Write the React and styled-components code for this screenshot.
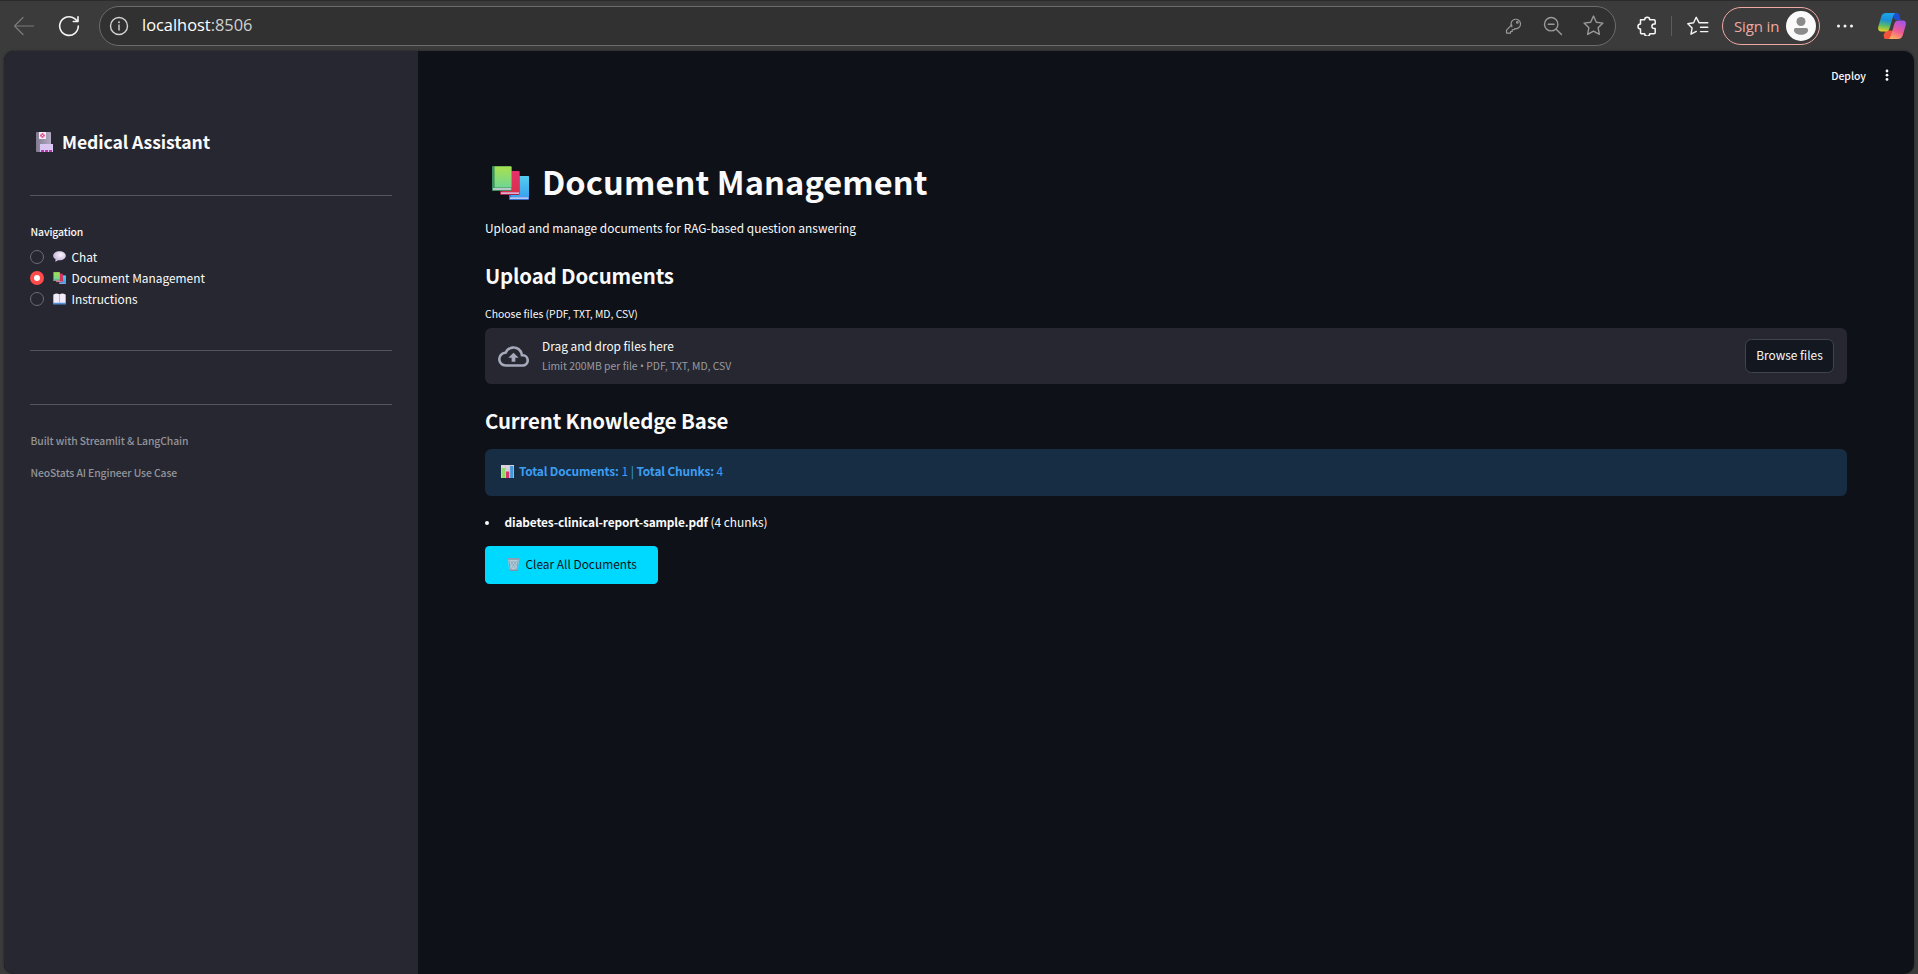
import React from 'react';
import styled, { createGlobalStyle } from 'styled-components';
import { MdOutlineCloudUpload } from 'react-icons/md';

const sans = '"Noto Sans CJK SC", "Noto Sans", sans-serif';

const Global = createGlobalStyle`
  *, *::before, *::after { box-sizing: border-box; }
  html, body { margin: 0; height: 100%; overflow: hidden; background: #3b3b3b; }
  h1, h2, p, ul { margin: 0; padding: 0; }
  svg { display: block; flex: none; }
`;

const Browser = styled.div`
  width: 1918px;
  height: 974px;
  display: flex;
  flex-direction: column;
  background: #3b3b3b;
  font: 400 11.9px/21px ${sans};
  color: #fafafa;
`;

/* ---------- browser toolbar ---------- */

const Toolbar = styled.header`
  height: 51px;
  flex: none;
  display: flex;
  align-items: center;
  padding: 0 12px 1px 13px;
  border-top: 1px solid #2b2b2b;
`;

const ToolIcon = styled.svg`
  width: ${p => p.$size || 20}px;
  height: ${p => p.$size || 20}px;
  margin-left: ${p => p.$gap || 0}px;
  fill: none;
  stroke: ${p => p.$color || '#f5f5f5'};
  stroke-width: ${p => p.$weight || 1.3};
  stroke-linecap: round;
  stroke-linejoin: round;
`;

const AddressBar = styled.div`
  width: 1517px;
  height: 40px;
  margin-left: 19px;
  padding: 0 11px 0 9px;
  display: flex;
  align-items: center;
  border: 1px solid #6c6c6c;
  border-radius: 20px;
  background: #313131;
`;

const Url = styled.span`
  flex: 1;
  margin: -1px 0 0 13px;
  font: 400 16.4px/22px "Open Sans", "Noto Sans", sans-serif;
  color: #fff;
  span { color: #d0d0d0; }
`;

const Separator = styled.i`
  width: 1px;
  height: 20px;
  margin: 0 15px 0 14px;
  background: #5c5c5c;
`;

const SignIn = styled.button`
  width: 98px;
  height: 38px;
  margin: 0 0 0 13px;
  padding: 0 3px 0 11px;
  display: flex;
  align-items: center;
  justify-content: space-between;
  border: 1.5px solid #efa9a4;
  border-radius: 19px;
  background: transparent;
  color: #efa9a4;
  font: 400 15px/20px "Open Sans", "Noto Sans", sans-serif;
  letter-spacing: -0.15px;
  white-space: nowrap;
`;

/* ---------- application page ---------- */

const Page = styled.div`
  flex: 1;
  display: flex;
  margin: 0 4px;
  overflow: hidden;
  border-radius: 10px;
  background: #0e1117;
  box-shadow: 0 0 3px rgba(0, 0, 0, 0.4);
`;

const Sidebar = styled.aside`
  width: 414px;
  flex: none;
  padding: 78px 26px 0;
  background: #262730;
`;

const Brand = styled.h2`
  display: flex;
  align-items: center;
  gap: 9px;
  padding-left: 6px;
  font-size: 17.6px;
  line-height: 25px;
  font-weight: 700;
  letter-spacing: -0.1px;
`;

const Rule = styled.hr`
  height: 1px;
  margin: ${p => p.$top}px 0 28px;
  border: 0;
  background: #53545c;
`;

const Caption = styled.p`
  padding-left: ${p => (p.$indent ? 0.5 : 0)}px;
  font-size: 10.4px;
  line-height: 15px;
  color: ${p => (p.$muted ? '#93949a' : '#fafafa')};
  font-weight: ${p => (p.$strong ? 500 : 400)};
  letter-spacing: ${p => (p.$strong ? -0.11 : 0)}px;
  & + & { margin-top: 17px; }
`;

const RadioList = styled.div`
  margin-top: 7px;
`;

const RadioItem = styled.label`
  display: flex;
  align-items: center;
  height: 21px;
`;

const Radio = styled.i`
  width: 14px;
  height: 14px;
  margin: 1px 9px 0 0;
  border-radius: 50%;
  border: ${p => (p.$on ? '4.5px solid #ff4b4b' : '1px solid #6b6c75')};
  background: ${p => (p.$on ? '#fff' : '#262730')};
`;

const RadioText = styled.span`
  margin-left: 5.5px;
`;

const Main = styled.main`
  flex: 1;
  min-width: 0;
  padding: 0 67px;
`;

const AppHeader = styled.div`
  height: 106px;
  margin-right: -42px;
  padding-top: 17px;
  display: flex;
  justify-content: flex-end;
  align-items: flex-start;
  gap: 19px;
  font-size: 10.4px;
  font-weight: 500;
  line-height: 15px;
  svg { margin-top: 1px; }
`;

const Title = styled.h1`
  display: flex;
  align-items: center;
  gap: 13px;
  padding-left: 7px;
  font-size: 32.6px;
  line-height: 47px;
  font-weight: 700;
  letter-spacing: 0.1px;
  svg { margin-top: 4px; }
`;

const Lead = styled.p`
  margin-top: 13px;
  letter-spacing: 0.02px;
`;

const Heading = styled.h2`
  margin-top: ${p => p.$top}px;
  font-size: 20.4px;
  line-height: 30px;
  font-weight: 700;
  letter-spacing: -0.15px;
`;

const FieldLabel = styled(Caption)`
  margin-top: 16px;
`;

const Dropzone = styled.section`
  height: 56px;
  margin-top: 7px;
  padding: 0 13px;
  display: flex;
  align-items: center;
  border-radius: 6.4px;
  background: #262730;
  > svg { color: #a5a9ba; }
`;

const DropText = styled.div`
  flex: 1;
  margin: -4px 0 0 13px;
`;

const Hint = styled(Caption)`
  margin-top: 2px;
  color: #9a9ba1;
  span { font-family: "Open Sans", sans-serif; }
`;

const BrowseButton = styled.button`
  width: 89px;
  height: 34px;
  padding: 0 0 3px;
  border: 1px solid #41444c;
  border-radius: 6.4px;
  background: #131720;
  color: #fafafa;
  font: 400 11.9px/21px ${sans};
`;

const InfoBox = styled.div`
  height: 47px;
  margin-top: 14px;
  padding: 11px 16px;
  display: flex;
  align-items: flex-start;
  gap: 5px;
  border-radius: 6.4px;
  background: #172d43;
  color: #3d9df3;
  svg { margin-top: 5px; }
`;

const Strong = styled.b`
  font-weight: 700;
  letter-spacing: -0.15px;
`;

const FileList = styled.ul`
  margin-top: 15px;
  list-style: none;
`;

const FileItem = styled.li`
  display: flex;
  align-items: center;
  white-space: pre;
  &::before {
    content: '';
    width: 4px;
    height: 4px;
    margin: 2px 15.5px 0 0;
    border-radius: 50%;
    background: #fafafa;
  }
`;

const ClearButton = styled.button`
  width: 173px;
  height: 38px;
  margin-top: 14px;
  padding: 0 0 3px 22px;
  display: flex;
  align-items: center;
  gap: 5.5px;
  border: 0;
  border-radius: 4.5px;
  background: #00d9ff;
  color: #0e1117;
  font: 400 11.9px/21px ${sans};
  svg { margin-top: 2px; }
`;

/* ---------- drawings ---------- */

const Books = ({ w, h }) => (
  <svg width={w} height={h} viewBox="0 0 37 34">
    <defs>
      <linearGradient id="bg" x2="0" y2="1"><stop stopColor="#a8e04f" /><stop offset="1" stopColor="#6fd693" /></linearGradient>
      <linearGradient id="br" x2="0" y2="1"><stop stopColor="#e6306c" /><stop offset="1" stopColor="#d92f4b" /></linearGradient>
      <linearGradient id="bb" x2="0" y2="1"><stop stopColor="#52cdf0" /><stop offset="1" stopColor="#39a2ee" /></linearGradient>
    </defs>
    <rect x="17" y="10" width="20" height="24" rx="1" fill="#2f72cf" />
    <rect x="19" y="10" width="18" height="21" rx="1" fill="url(#bb)" />
    <rect x="18" y="31.4" width="18.5" height="1.4" fill="#e3d9f5" />
    <rect x="8" y="5" width="19.5" height="24" rx="1" fill="#a62350" />
    <rect x="10" y="5" width="17.5" height="21" rx="1" fill="url(#br)" />
    <rect x="9" y="26.4" width="18" height="1.4" fill="#f0cfe8" />
    <rect x="0" y="0" width="19.5" height="25" rx="1" fill="#3f8f5e" />
    <rect x="2.6" y="0.6" width="16.9" height="21" rx="0.6" fill="url(#bg)" />
    <rect x="1" y="22.3" width="18.2" height="1.4" fill="#e9dff5" />
  </svg>
);

const Hospital = () => (
  <svg width="17" height="20" viewBox="0 0 17 20">
    <defs><linearGradient id="hw"><stop stopColor="#817a91" /><stop offset="1" stopColor="#b3abc2" /></linearGradient></defs>
    <rect width="15" height="20" rx="1" fill="url(#hw)" />
    <rect x="3" y="0" width="7" height="7" rx="0.6" fill="#f6e9f6" />
    <path d="M6.5 1.2v4.600M4.200 3.500h4.600" stroke="#e0457f" strokeWidth="1.800" />
    <circle cx="6.500" cy="3.500" r="0.700" fill="#f6e9f6" />
    <rect x="4" y="12" width="13" height="8" fill="#dac6f3" />
    <path d="M5 19h11" stroke="#b83aa5" strokeWidth="2" strokeDasharray="3 1" />
  </svg>
);

const Chat = () => (
  <svg width="13" height="11" viewBox="0 0 13 11">
    <defs><radialGradient id="cb" cx="0.6" cy="0.35"><stop stopColor="#fbf6fd" /><stop offset="1" stopColor="#cfc0df" /></radialGradient></defs>
    <path d="M6.5.3c3.600 0 6.300 1.900 6.300 4.500s-2.700 4.500-6.300 4.500c-.5 0-1 0-1.500-.1-.8.8-1.900 1.200-3.100 1.200.5-.6.8-1.300.7-2.100C1.100 7.500.2 6.200.2 4.800.2 2.200 2.900.3 6.500.3z" fill="url(#cb)" />
  </svg>
);

const OpenBook = () => (
  <svg width="13" height="12" viewBox="0 0 13 12">
    <rect y="1.500" width="13" height="10" rx="0.600" fill="#4e8fd8" />
    <path d="M.6 1.500Q3.500-.2 6.300 1.200V9.800H.6zM12.400 1.500Q9.500-.2 6.700 1.200V9.800h5.700z" fill="#f1ebfa" />
    <path d="M6.500 1v9" stroke="#b9abd0" strokeWidth="0.700" />
  </svg>
);

const Chart = () => (
  <svg width="13" height="13" viewBox="0 0 13 13">
    <rect width="13" height="13" fill="#d9d3e2" />
    <path d="M0 4.300h13M0 8.500h13M4.500 0v13M8.800 0v13" stroke="#bdb6c9" strokeWidth="0.400" />
    <rect x="0.800" y="3" width="3.200" height="10" fill="#93d86b" />
    <rect x="5" y="6.500" width="3.200" height="6.500" fill="#d8356c" />
    <rect x="9.200" y="1" width="3.200" height="12" fill="#3f97dc" />
  </svg>
);

const Trash = () => (
  <svg width="13" height="13" viewBox="0 0 13 13">
    <path d="M1 1.500h11L10.800 12H2.200z" fill="#b4cbd8" />
    <path d="M2 2.500L3 12M11 2.500L10 12" stroke="#8d93a6" strokeWidth="0.900" />
    <path d="M3.500 3l5.500 8M9.500 3L4 11M6.500 3L10 8M6.500 3L3 8" stroke="#7c9cb2" strokeWidth="0.600" />
    <path d="M0 .9h13" stroke="#9d97a8" strokeWidth="1.600" />
    <path d="M2 12.200h9" stroke="#8d8a9c" strokeWidth="1.300" />
  </svg>
);

const Avatar = () => (
  <svg width="30" height="30" viewBox="0 0 30 30">
    <circle cx="15" cy="15" r="15" fill="#fafafa" />
    <circle cx="15" cy="10.500" r="4.500" fill="#8b8b8b" />
    <path d="M9.800 17h10.400a1.900 1.900 0 0 1 1.900 1.900c0 3-3.200 4.800-7.100 4.800s-7.100-1.800-7.100-4.800A1.900 1.900 0 0 1 9.800 17z" fill="#8b8b8b" />
  </svg>
);

const AssistantLogo = styled.svg`
  margin-left: 24px;
`;

const Assistant = () => (
  <AssistantLogo width="28" height="26" viewBox="0 0 28 26">
    <defs>
      <linearGradient id="ca" x1="0.300" y1="0" x2="0.150" y2="1"><stop stopColor="#1ba3ea" /><stop offset="0.350" stopColor="#1c8fd6" /><stop offset="0.650" stopColor="#57b96a" /><stop offset="1" stopColor="#f3d21b" /></linearGradient>
      <linearGradient id="cc" x1="0.700" y1="0" x2="0.300" y2="1"><stop stopColor="#a652ec" /><stop offset="0.550" stopColor="#ee5a94" /><stop offset="1" stopColor="#ffae5c" /></linearGradient>
    </defs>
    <path d="M14 0h4.500c1.700 0 2.600 1 3 2.500L22.600 7H17z" fill="#1d4fd0" />
    <path d="M6.500 26h5c2 0 2.700-1.200 3.200-3L16 18l-8-1-2.500 5z" fill="#f0543c" />
    <path d="M8 0h9.500c-1.500.6-2 2-2.500 3.800l-3.200 11c-.6 2.200-1.800 3.700-4.200 3.700H3.300C.6 18.500-.4 16.500.3 13.800L3.200 3.700C3.900 1.300 5.500 0 8 0z" fill="url(#ca)" />
    <path d="M20 26h-9.500c1.500-.6 2-2 2.500-3.800l3.200-11c.6-2.200 1.800-3.700 4.200-3.700h4.300c2.700 0 3.700 2 3 4.700l-2.900 10.100C24.100 24.700 22.500 26 20 26z" fill="url(#cc)" />
  </AssistantLogo>
);

const starPath = 'M10 1l2.700 5.900 6.300.8-4.600 4.400 1.200 6.400L10 15.400l-5.600 3.100 1.200-6.400L1 7.700l6.300-.8z';

const BrowserToolbar = () => (
  <Toolbar>
    <ToolIcon $size={22} viewBox="0 0 22 22" $color="#7a7a7a" $weight={1.2}>
      <path d="M1.500 11H20.500M10 2.500L1.500 11l8.500 8.500" />
    </ToolIcon>
    <ToolIcon $size={22} $gap={23} viewBox="0 0 22 22" $weight={1.6}>
      <path d="M20.300 11a9.300 9.300 0 1 1-3.600-7.300L20 6.500M20 1.800v4.700h-4.700" />
    </ToolIcon>
    <AddressBar>
      <ToolIcon viewBox="0 0 20 20" $color="#d2d2d2" $weight={1.4}>
        <circle cx="10" cy="10" r="8.500" /><path d="M10 9v5" /><path d="M10 6.200v.1" strokeWidth="1.900" />
      </ToolIcon>
      <Url>localhost<span>:8506</span></Url>
      <ToolIcon viewBox="0 0 20 20" $size={18} $color="#9a9a9a">
        <path d="M7.600 10.800A5.300 5.300 0 1 1 11 13l-1.200 1.200H8v1.900H6.200v1.800H1.700v-3.400l5.700-5.700z" /><circle cx="13.700" cy="6" r="0.900" />
      </ToolIcon>
      <ToolIcon viewBox="0 0 20 20" $gap={20} $color="#9a9a9a" $weight={1.4}>
        <circle cx="8.200" cy="8.200" r="6.700" /><path d="M13.200 13.200l5.300 5.300M5.300 8.200h5.800" />
      </ToolIcon>
      <ToolIcon viewBox="0 0 20 20" $gap={20} $size={21} $color="#9a9a9a"><path d={starPath} /></ToolIcon>
    </AddressBar>
    <ToolIcon viewBox="0 0 20 20" $gap={21} $weight={1.5}>
      <path d="M3.500 3.800h4.200a2.500 2.500 0 0 1 5 0h4.300a1.200 1.200 0 0 1 1.200 1.200v3h-1a2.300 2.300 0 0 0 0 4.600h1v4a1.200 1.200 0 0 1-1.200 1.200h-4.300a2.500 2.500 0 0 1-5 0H4.700a1.200 1.200 0 0 1-1.200-1.200v-3.700a2.500 2.500 0 0 1 0-5z" />
    </ToolIcon>
    <Separator />
    <ToolIcon viewBox="0 0 22 20" $size={22} $weight={1.4}>
      <path d="M12.200 6.800L9.200 1.300 6.600 6.800.8 7.700l4.300 4.200-1.100 6.300 5.300-2.800M12.200 6.800h8.600M13.500 11.200h7.300M13.500 15.600h7.300" />
    </ToolIcon>
    <SignIn>Sign in<Avatar /></SignIn>
    <ToolIcon viewBox="0 0 18 18" $size={18} $gap={16} $weight={3}><path d="M2.500 9h0M9 9h0M15.500 9h0" /></ToolIcon>
    <Assistant />
  </Toolbar>
);

export default function App() {
  return (
    <Browser>
      <Global />
      <BrowserToolbar />
      <Page>
        <Sidebar>
          <Brand><Hospital />Medical Assistant</Brand>
          <Rule $top={41} />
          <Caption $indent $strong>Navigation</Caption>
          <RadioList>
            <RadioItem><Radio /><Chat /><RadioText>Chat</RadioText></RadioItem>
            <RadioItem><Radio $on /><Books w={13} h={12} /><RadioText>Document Management</RadioText></RadioItem>
            <RadioItem><Radio /><OpenBook /><RadioText>Instructions</RadioText></RadioItem>
          </RadioList>
          <Rule $top={41} />
          <Rule $top={53} />
          <Caption $indent $muted $strong>Built with Streamlit &amp; LangChain</Caption>
          <Caption $indent $muted $strong>NeoStats AI Engineer Use Case</Caption>
        </Sidebar>
        <Main>
          <AppHeader>
            Deploy
            <svg width="4" height="12" viewBox="0 0 4 12" fill="#fafafa">
              <circle cx="2" cy="2" r="1.4" /><circle cx="2" cy="6.2" r="1.4" /><circle cx="2" cy="10.4" r="1.4" />
            </svg>
          </AppHeader>
          <Title><Books w={37} h={34} />Document Management</Title>
          <Lead>Upload and manage documents for RAG-based question answering</Lead>
          <Heading $top={22}>Upload Documents</Heading>
          <FieldLabel>Choose files (PDF, TXT, MD, CSV)</FieldLabel>
          <Dropzone>
            <MdOutlineCloudUpload size={31} />
            <DropText>
              <div>Drag and drop files here</div>
              <Hint>Limit 200MB per file <span>•</span> PDF, TXT, MD, CSV</Hint>
            </DropText>
            <BrowseButton>Browse files</BrowseButton>
          </Dropzone>
          <Heading $top={21}>Current Knowledge Base</Heading>
          <InfoBox>
            <Chart />
            <span><Strong>Total Documents:</Strong> 1 | <Strong>Total Chunks:</Strong> 4</span>
          </InfoBox>
          <FileList>
            <FileItem><Strong>diabetes-clinical-report-sample.pdf</Strong> (4 chunks)</FileItem>
          </FileList>
          <ClearButton><Trash />Clear All Documents</ClearButton>
        </Main>
      </Page>
    </Browser>
  );
}
